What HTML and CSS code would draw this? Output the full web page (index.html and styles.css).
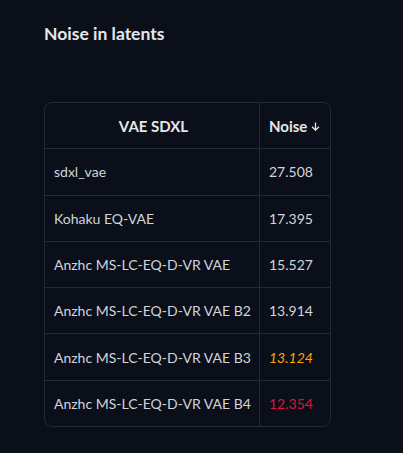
FILE: index.html
```html
<!DOCTYPE html>
<html lang="en">
<head>
<meta charset="utf-8">
<title>Noise in latents</title>
<link rel="stylesheet" href="styles.css">
</head>
<body>
<main class="page">
  <h2 class="title">Noise in latents</h2>
  <div class="table">
    <div class="cell head first">VAE SDXL</div>
    <div class="cell head">Noise
      <svg class="arrow" width="9" height="9" viewBox="0 0 9 9" aria-hidden="true"><path d="M4.5 0.5V8.2M1 4.8L4.5 8.2L8 4.8" fill="none" stroke="currentColor" stroke-width="1.3"/></svg>
    </div>

    <div class="cell">sdxl_vae</div>
    <div class="cell num">27.508</div>

    <div class="cell">Kohaku EQ-VAE</div>
    <div class="cell num">17.395</div>

    <div class="cell">Anzhc MS-LC-EQ-D-VR VAE</div>
    <div class="cell num">15.527</div>

    <div class="cell">Anzhc MS-LC-EQ-D-VR VAE B2</div>
    <div class="cell num">13.914</div>

    <div class="cell">Anzhc MS-LC-EQ-D-VR VAE B3</div>
    <div class="cell num second-best">13.124</div>

    <div class="cell last">Anzhc MS-LC-EQ-D-VR VAE B4</div>
    <div class="cell num best last">12.354</div>
  </div>
</main>
</body>
</html>
```
FILE: styles.css
```css
html, body {
  margin: 0;
  padding: 0;
  background: #0b0f19;
}
body {
  font-family: "Lato", "Noto Sans", sans-serif;
  color: #d1d5db;
}
.page {
  padding: 23px 0 0 44px;
}
.title {
  margin: 0;
  font-size: 17.5px;
  line-height: 22px;
  font-weight: 700;
  color: #e5e7eb;
}
.table {
  margin-top: 57px;
  display: grid;
  grid-template-columns: 215px 70px;
  width: 287px;
  box-sizing: border-box;
  border: 1px solid #232a37;
  border-radius: 8px;
  overflow: hidden;
}
.cell {
  box-sizing: border-box;
  height: 46.3px;
  display: flex;
  align-items: center;
  padding: 0 6px 0 9px;
  font-size: 14px;
  white-space: nowrap;
  border-bottom: 1px solid #232a37;
}
.cell:nth-child(odd) {
  border-right: 1px solid #232a37;
}
.cell:nth-child(even) {
  padding-left: 9px;
}
.cell.last {
  border-bottom: none;
  height: 45.3px;
}
.head {
  font-size: 15px;
  font-weight: 700;
  color: #e5e7eb;
  gap: 4px;
}
.head.first {
  justify-content: center;
}
.arrow {
  display: block;
  margin-top: 1px;
}
.second-best {
  color: #ffa500;
  font-style: italic;
}
.best {
  color: #dc143c;
}
```
